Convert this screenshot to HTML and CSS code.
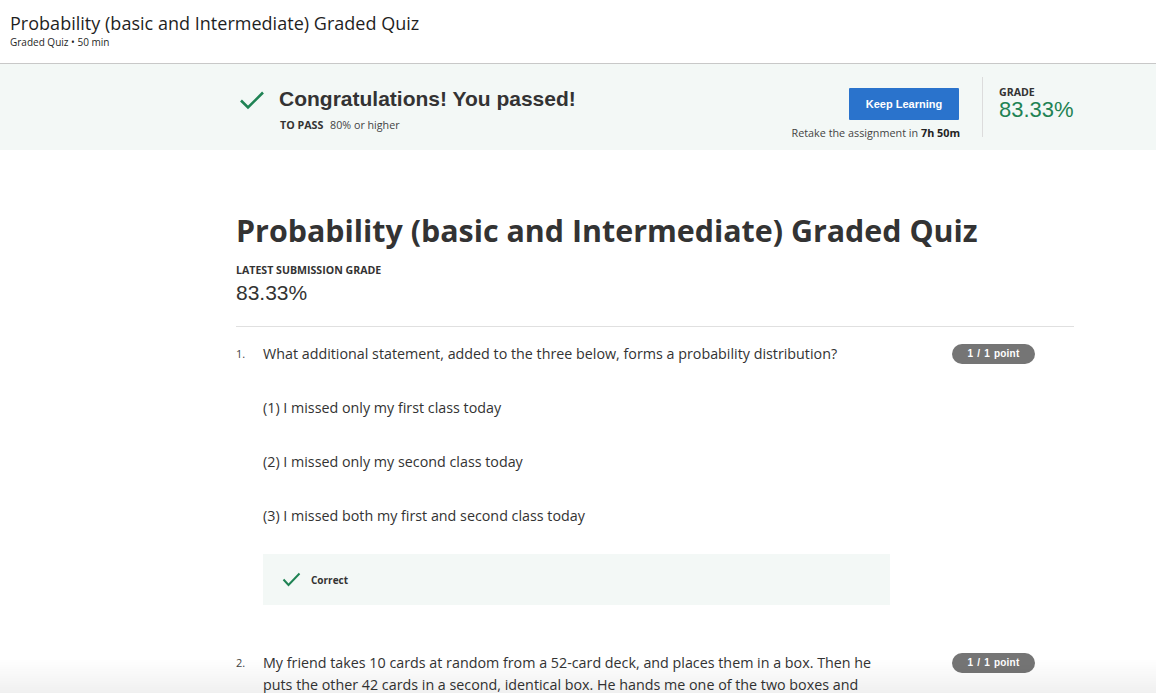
FILE: index.html
```html
<!DOCTYPE html>
<html>
<head>
<meta charset="utf-8">
<link rel="stylesheet" href="styles.css">
</head>
<body>
<header class="topbar">
  <div class="topbar-title">Probability (basic and Intermediate) Graded Quiz</div>
  <div class="topbar-sub">Graded Quiz • 50 min</div>
</header>
<section class="banner">
  <div class="banner-inner">
    <div class="pass">
      <svg class="pass-check" width="26" height="20" viewBox="0 0 26 20"><path d="M2 10.5 L9 17.5 L24 2.5" fill="none" stroke="#1f8354" stroke-width="2.6"/></svg>
      <div class="pass-text">
        <div class="pass-title">Congratulations! You passed!</div>
        <div class="pass-req"><b>TO PASS</b> 80% or higher</div>
      </div>
    </div>
    <div class="actions">
      <button class="btn">Keep Learning</button>
      <div class="retake">Retake the assignment in <b>7h 50m</b></div>
    </div>
    <div class="grade">
      <div class="grade-label">GRADE</div>
      <div class="grade-val">83.33%</div>
    </div>
  </div>
</section>
<main class="content">
  <h1 class="title">Probability (basic and Intermediate) Graded Quiz</h1>
  <div class="latest-label">LATEST SUBMISSION GRADE</div>
  <div class="latest-val">83.33%</div>
  <hr class="rule">
  <div class="question">
    <div class="qnum">1.</div>
    <div class="qbody">
      <p class="qtext">What additional statement, added to the three below, forms a probability distribution?</p>
      <p class="opt">(1) I missed only my first class today</p>
      <p class="opt">(2) I missed only my second class today</p>
      <p class="opt">(3) I missed both my first and second class today</p>
      <div class="feedback">
        <svg width="19" height="15" viewBox="0 0 19 15"><path d="M1.5 7.5 L6.5 13 L17.5 1.5" fill="none" stroke="#1f8354" stroke-width="2"/></svg>
        <span>Correct</span>
      </div>
    </div>
    <div class="pill">1 / 1 point</div>
  </div>
  <div class="question q2">
    <div class="qnum">2.</div>
    <div class="qbody">
      <p class="qtext">My friend takes 10 cards at random from a 52-card deck, and places them in a box. Then he puts the other 42 cards in a second, identical box. He hands me one of the two boxes and</p>
    </div>
    <div class="pill">1 / 1 point</div>
  </div>
</main>
<div class="fade"></div>
</body>
</html>
```
FILE: styles.css
```css
* { box-sizing: border-box; }
html, body { margin: 0; padding: 0; }
body {
  font-family: "Open Sans", "Liberation Sans", sans-serif;
  color: #333;
  background: #fff;
  height: 693px;
  overflow: hidden;
}
.topbar {
  height: 64px;
  border-bottom: 1px solid #c8c8c8;
  padding: 11px 10px 0;
}
.topbar-title {
  font-size: 18px;
  line-height: 24px;
  color: #1f1f1f;
  letter-spacing: 0.02px;
}
.topbar-sub {
  font-size: 10px;
  line-height: 14px;
  color: #1f1f1f;
}
.banner {
  background: #f3f8f6;
  height: 86px;
}
.banner-inner {
  margin-left: 236px;
  width: 838px;
  display: flex;
  align-items: flex-start;
  height: 100%;
}
.pass {
  display: flex;
  align-items: flex-start;
  padding-top: 23px;
  flex: 1;
}
.pass-check { margin: 3px 14px 0 3px; }
.pass-title {
  font-family: "Liberation Sans", Arial, sans-serif;
  font-weight: bold;
  font-size: 21px;
  line-height: 24px;
  color: #333;
}
.pass-req {
  font-size: 10.7px;
  margin-top: 7px;
  padding-left: 1px;
  color: #444;
}
.pass-req b { color: #333; margin-right: 4px; }
.actions {
  padding-top: 24px;
  display: flex;
  flex-direction: column;
  align-items: flex-end;
  margin-right: 22px;
}
.btn {
  background: #2a73cc;
  border: 0;
  border-radius: 1px;
  color: #fff;
  font-family: "Liberation Sans", Arial, sans-serif;
  font-weight: bold;
  font-size: 11px;
  width: 110px;
  height: 32px;
  margin-right: 1px;
}
.retake {
  font-size: 10.8px;
  margin-top: 5px;
  color: #444;
}
.retake b { color: #222; }
.grade {
  border-left: 1px solid #dcdcdc;
  margin-top: 13px;
  height: 60px;
  width: 92px;
  padding: 9px 0 0 16px;
}
.grade-label {
  font-size: 10.6px;
  font-weight: bold;
  color: #333;
  line-height: 12px;
}
.grade-val {
  font-family: "Liberation Sans", Arial, sans-serif;
  font-size: 22px;
  color: #1f8354;
  line-height: 24px;
}
.content {
  margin-left: 236px;
  width: 838px;
  padding-top: 61px;
}
.title {
  margin: 0;
  font-size: 30.4px;
  font-weight: bold;
  line-height: 40px;
  color: #333;
}
.latest-label {
  margin-top: 13px;
  font-size: 10.6px;
  font-weight: bold;
  line-height: 12px;
  color: #333;
}
.latest-val {
  font-family: "Liberation Sans", Arial, sans-serif;
  font-size: 21px;
  line-height: 26px;
  margin-top: 4px;
  color: #333;
}
.rule {
  border: 0;
  border-top: 1px solid #e0e0e0;
  margin: 20px 0 0;
}
.question {
  display: flex;
  align-items: flex-start;
  padding-top: 16px;
}
.qnum {
  width: 27px;
  font-size: 11px;
  line-height: 22px;
  color: #444;
}
.qbody { width: 627px; }
.qtext, .opt {
  margin: 0;
  font-size: 14.3px;
  line-height: 22px;
  color: #333;
}
.opt { margin-top: 32px; }
.feedback {
  margin-top: 27px;
  background: #f3f8f6;
  height: 51px;
  display: flex;
  align-items: center;
  padding-left: 19px;
  font-size: 10px;
  font-weight: bold;
  color: #333;
}
.feedback svg { margin-right: 10px; }
.pill {
  margin-left: 62px;
  margin-top: 1px;
  background: #757575;
  color: #fff;
  border-radius: 10px;
  height: 20px;
  width: 83px;
  text-align: center;
  font-family: "Liberation Sans", Arial, sans-serif;
  font-weight: bold;
  font-size: 10px;
  line-height: 20px;
  letter-spacing: 0.2px;
  word-spacing: 1px;
}
.q2 { padding-top: 47px; }
.fade {
  position: fixed;
  left: 0;
  right: 0;
  bottom: 0;
  height: 34px;
  background: linear-gradient(to bottom, rgba(0,0,0,0), rgba(0,0,0,0.06));
  pointer-events: none;
}
```
